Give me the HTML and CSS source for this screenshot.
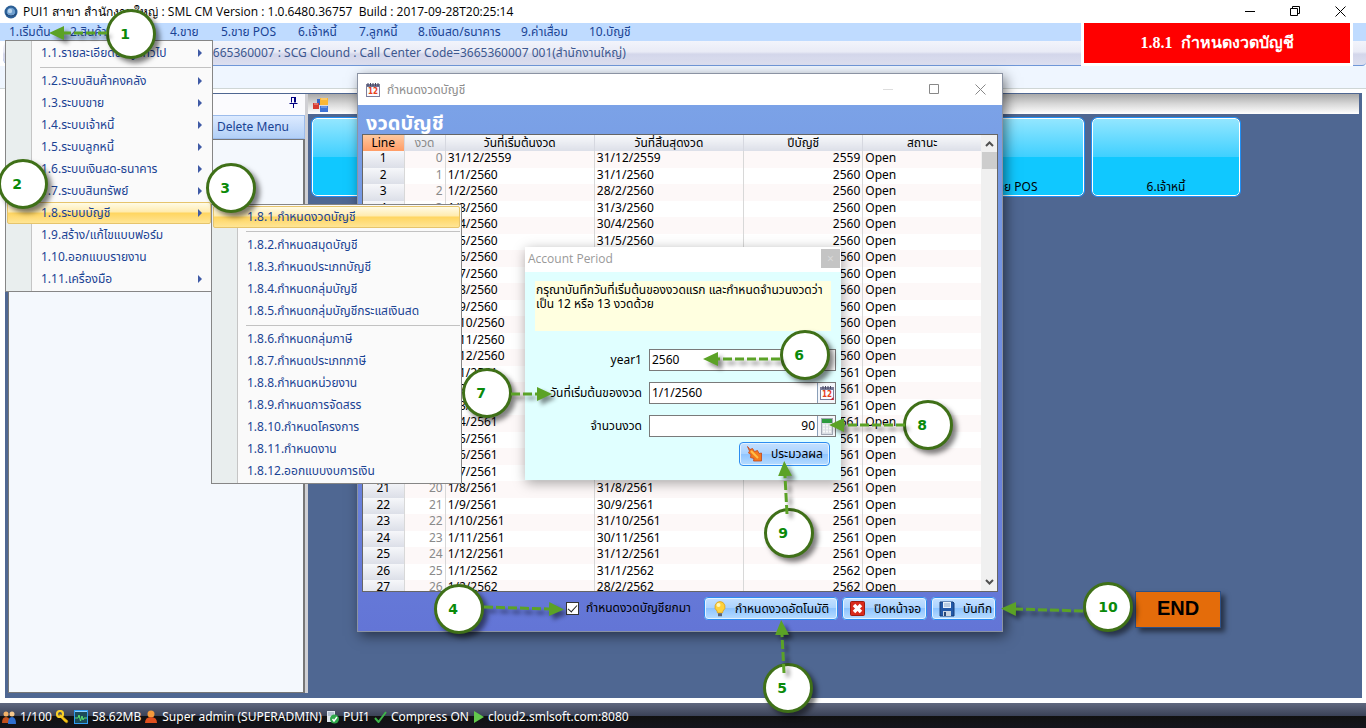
FILE: index.html
```html
<!DOCTYPE html>
<html lang="th">
<head>
<meta charset="utf-8">
<title>SML CM</title>
<link rel="stylesheet" href="styles.css">
</head>
<body>
<header class="titlebar">
  <svg class="app-icon" width="14" height="14" viewBox="0 0 14 14"><circle cx="7" cy="7" r="6.5" fill="#2b5f96"/><circle cx="7" cy="7" r="4.2" fill="#6f9fce"/><circle cx="6" cy="6" r="2.2" fill="#b8d3ec"/><path d="M2 9q5 4 10 0" stroke="#1d3f6e" fill="none"/></svg>
  <h1 class="titlebar-text">PUI1 สาขา สำนักงานใหญ่ : SML CM Version : 1.0.6480.36757 &nbsp;Build : 2017-09-28T20:25:14</h1>
  <div class="window-buttons">
    <button aria-label="Minimize"><svg width="11" height="11" viewBox="0 0 11 11"><path d="M0 5.500h10" stroke="#000"/></svg></button>
    <button aria-label="Restore"><svg width="11" height="11" viewBox="0 0 11 11"><path d="M.5 2.500h7v7h-7zM2.500 2.500v-2h7v7h-2" fill="none" stroke="#000"/></svg></button>
    <button aria-label="Close"><svg width="11" height="11" viewBox="0 0 11 11"><path d="M.5 .5l10 10M10.500 .5l-10 10" stroke="#000"/></svg></button>
  </div>
</header>

<nav class="menubar">
  <button class="w61">1.เริ่มต้น</button><button class="w61">2.สินค้า</button><button class="w39">3.ซื้อ</button><button class="w51">4.ขาย</button><button class="w77">5.ขาย POS</button><button class="w61">6.เจ้าหนี้</button><button class="w59">7.ลูกหนี้</button><button class="w103">8.เงินสด/ธนาคาร</button><button class="w68">9.ค่าเสื่อม</button><button class="w61">10.บัญชี</button>
</nav>
<div class="infobar"><span>3665360007 : SCG Clound : Call Center Code=3665360007 001(สำนักงานใหญ่)</span></div>
<div class="strip"></div>

<main class="workspace">
  <aside class="dock">
    <div class="dock-title"><svg width="9" height="11" viewBox="0 0 9 11"><path d="M2 .5h5M2.500 .5v5M5.500 .5v5M6.500 .5v5M.5 6.500h8M4.500 7v4" stroke="#000080" fill="none"/></svg></div>
    <div class="dock-tools"><button>Delete Menu</button></div>
    <div class="dock-list"></div>
  </aside>
  <section class="desk">
    <div class="tabs"><svg width="16" height="14" viewBox="0 0 16 14"><rect x="4" y="1" width="7" height="6" fill="#3466c8"/><rect x="7" y="0" width="8" height="7" fill="#fbb735"/><rect x="0" y="5" width="6" height="6" fill="#d63a2f"/><rect x="7" y="8" width="8" height="6" fill="#3f73d6"/><path d="M8 1h6M1 6h4M8 9h6" stroke="#fff" opacity=".5"/></svg></div>
    <div class="tiles">
      <button>1.เริ่มต้น</button><button>2.สินค้า</button><button>3.ซื้อ</button><button>4.ขาย</button><button>5.ขาย POS</button><button>6.เจ้าหนี้</button>
    </div>
  </section>
</main>

<footer class="status">
  <svg width="14" height="13" viewBox="0 0 14 13"><circle cx="4" cy="3" r="2.500" fill="#f2b36a"/><path d="M0 12q0-6 4-6t4 6z" fill="#c4501c"/><circle cx="10" cy="3" r="2.500" fill="#f7c98c"/><path d="M6 13q0-7 4-7t4 7z" fill="#2f6fd0"/></svg>
  <span>1/100</span>
  <svg width="14" height="14" viewBox="0 0 14 14"><path d="M4 4l8 7-1 2-2-1-6-6z" fill="#f5c518" stroke="#b78a08" stroke-width=".6"/><circle cx="4" cy="4" r="3" fill="none" stroke="#f8cf28" stroke-width="2.200"/></svg>
  <svg width="14" height="14" viewBox="0 0 14 14"><rect x=".5" y=".5" width="13" height="13" fill="#1c4b58" stroke="#2f9cf2"/><path d="M1 1.500h12" stroke="#8fd0ff"/><path d="M1 8h3l1-3 1.500 6 1.500-5 1 4 1-2h3" stroke="#58e070" fill="none"/></svg>
  <span>58.62MB</span>
  <svg width="13" height="14" viewBox="0 0 13 14"><circle cx="6" cy="4" r="3.500" fill="#f59a3c"/><path d="M0 13q0-6 6-6t6 6z" fill="#e0501e"/></svg>
  <span>Super admin (SUPERADMIN)</span>
  <svg width="13" height="14" viewBox="0 0 13 14"><path d="M1 1h8v11h-8z" fill="#dfe6ee"/><path d="M2 3h6M2 5h6" stroke="#8b9db5"/><circle cx="8.500" cy="9" r="4.500" fill="#2fa84a"/><path d="M6.500 9l1.500 2 3-4" stroke="#fff" stroke-width="1.400" fill="none"/></svg>
  <span>PUI1</span>
  <svg width="13" height="12" viewBox="0 0 13 12"><path d="M1 7l3.500 4L12 1" stroke="#3fb54a" stroke-width="2" fill="none"/></svg>
  <span>Compress ON</span>
  <svg width="11" height="12" viewBox="0 0 11 12"><path d="M1 0l10 6-10 6z" fill="#62c84c"/></svg>
  <span>cloud2.smlsoft.com:8080</span>
</footer>

<section class="window" aria-label="กำหนดงวดบัญชี">
  <div class="window-title">
    <svg width="14" height="14" viewBox="0 0 14 14"><rect x=".5" y="1.500" width="13" height="12" fill="#fbfbff" stroke="#7d7d9a"/><path d="M1 2h12v2h-12z" fill="#6f7390"/><path d="M2 0v3M4.500 0v3M7 0v3M9.500 0v3M12 0v3" stroke="#43455e"/><text x="2" y="10.500" class="cal">12</text></svg>
    <span>กำหนดงวดบัญชี</span>
    <div class="window-buttons dim">
      <button aria-label="Minimize"><svg width="11" height="11" viewBox="0 0 11 11"><path d="M0 5.500h10" stroke="#ddd"/></svg></button>
      <button aria-label="Maximize"><svg width="11" height="11" viewBox="0 0 11 11"><path d="M.5 .5h9v9h-9z" fill="none" stroke="#888"/></svg></button>
      <button aria-label="Close"><svg width="11" height="11" viewBox="0 0 11 11"><path d="M.5 .5l10 10M10.500 .5l-10 10" stroke="#888"/></svg></button>
    </div>
  </div>
  <div class="window-body">
    <h2>งวดบัญชี</h2>
    <div class="grid">
      <div class="grid-view">
        <table>
          <colgroup><col class="c-line"><col class="c-no"><col class="c-date"><col class="c-date"><col class="c-year"><col class="c-state"></colgroup>
          <thead><tr><th>Line</th><th>งวด</th><th>วันที่เริ่มต้นงวด</th><th>วันที่สิ้นสุดงวด</th><th>ปีบัญชี</th><th>สถานะ</th></tr></thead>
          <tbody id="periods"></tbody>
        </table>
      </div>
      <div class="scroll">
        <svg width="9" height="6" viewBox="0 0 9 6"><path d="M1 5l3.500-3.500L8 5" fill="none" stroke="#505050" stroke-width="2"/></svg>
        <i class="thumb"></i>
        <svg width="9" height="6" viewBox="0 0 9 6"><path d="M1 1l3.500 3.500L8 1" fill="none" stroke="#505050" stroke-width="2"/></svg>
      </div>
    </div>
    <div class="window-actions">
      <label class="check"><input type="checkbox" checked>กำหนดงวดบัญชียกมา</label>
      <button class="btn wide"><svg width="12" height="16" viewBox="0 0 12 16"><path d="M6 .5a5.300 5.300 0 0 0-3 9.500l.5 2h5l.5-2A5.300 5.300 0 0 0 6 .5z" fill="#ffd23c" stroke="#d99a12" stroke-width=".7"/><circle cx="4.500" cy="4" r="2" fill="#fff6b8"/><path d="M4 13h4M4 14.500h4" stroke="#5c6474" stroke-width="1.300"/></svg><span>กำหนดงวดอัตโนมัติ</span></button>
      <button class="btn mid"><svg width="16" height="16" viewBox="0 0 16 16"><rect x=".5" y=".5" width="14" height="14" rx="1" fill="#d92a1c" stroke="#9c1b10"/><path d="M4 4l7 7M11 4l-7 7" stroke="#fff" stroke-width="3.500"/></svg><span>ปิดหน้าจอ</span></button>
      <button class="btn small"><svg width="16" height="16" viewBox="0 0 16 16"><path d="M1 1h13l1 1v13H1z" fill="#2258a8" stroke="#173c78"/><path d="M4 1h8v6H4z" fill="#e8f1fb"/><path d="M5 3h6M5 5h6" stroke="#88a6cc"/><path d="M4 10h8v5H4z" fill="#c9d4e2"/><path d="M5 11h2v4H5z" fill="#2a4878"/></svg><span>บันทึก</span></button>
    </div>
  </div>
</section>

<form class="prompt" aria-label="Account Period">
  <div class="prompt-title"><span>Account Period</span><button type="button" aria-label="Close">×</button></div>
  <div class="prompt-body">
    <p class="note">กรุณาบันทึกวันที่เริ่มต้นของงวดแรก และกำหนดจำนวนงวดว่าเป็น 12 หรือ 13 งวดด้วย</p>
    <div class="field"><label for="year">year1</label><div class="entry"><input id="year" value="2560"></div></div>
    <div class="field"><label for="start">วันที่เริ่มต้นของงวด</label><div class="entry"><input id="start" value="1/1/2560"><button type="button" aria-label="ปฏิทิน"><svg width="14" height="15" viewBox="0 0 14 15"><rect x=".5" y="1.500" width="13" height="12" fill="#fbfbff" stroke="#7d7d9a"/><path d="M1 2h12v2h-12z" fill="#777b99"/><path d="M3 0v3M5.500 0v3M8 0v3M10.500 0v3" stroke="#43455e"/><text x="2" y="11" class="cal">12</text><path d="M10 14l3.500-3v3z" fill="#c23"/></svg></button></div></div>
    <div class="field"><label for="count">จำนวนงวด</label><div class="entry"><input id="count" class="num" value="90"><button type="button" aria-label="เครื่องคิดเลข"><svg width="12" height="17" viewBox="0 0 12 17"><rect x=".5" y=".5" width="11" height="16" fill="#d9dce2" stroke="#a3a8b4"/><path d="M1 1h10v4H1z" fill="#2e9b3e"/><path d="M2 7.500h8M2 10.500h8M2 13.500h8" stroke="#f8f8f8" stroke-width="2" stroke-dasharray="2 1"/></svg></button></div></div>
    <div class="prompt-actions"><button type="button" class="btn run"><svg width="16" height="16" viewBox="0 0 16 16"><path d="M.5 .5l2.500 3 2.500-1 2 3 3-1 1.500 3 2.500-.5v8H6.500l.5-2.500-3.500-1 .5-3-2.500-1.500 1-2z" fill="#f47a1e" stroke="#c2441a" stroke-width=".8"/><path d="M4 5l7 7" stroke="#ffc04a" stroke-width="2"/></svg><span>ประมวลผล</span></button></div>
  </div>
</form>

<div class="popup main-menu" role="menu">
  <button class="sub">1.1.รายละเอียดข้อมูลทั่วไป</button>
  <hr>
  <button class="sub">1.2.ระบบสินค้าคงคลัง</button>
  <button class="sub">1.3.ระบบขาย</button>
  <button class="sub">1.4.ระบบเจ้าหนี้</button>
  <button class="sub">1.5.ระบบลูกหนี้</button>
  <button class="sub">1.6.ระบบเงินสด-ธนาคาร</button>
  <button class="sub">1.7.ระบบสินทรัพย์</button>
  <button class="sub active">1.8.ระบบบัญชี</button>
  <button>1.9.สร้าง/แก้ไขแบบฟอร์ม</button>
  <button>1.10.ออกแบบรายงาน</button>
  <button class="sub">1.11.เครื่องมือ</button>
</div>
<div class="popup sub-menu" role="menu">
  <button class="active">1.8.1.กำหนดงวดบัญชี</button>
  <hr>
  <button>1.8.2.กำหนดสมุดบัญชี</button>
  <button>1.8.3.กำหนดประเภทบัญชี</button>
  <button>1.8.4.กำหนดกลุ่มบัญชี</button>
  <button>1.8.5.กำหนดกลุ่มบัญชีกระแสเงินสด</button>
  <hr>
  <button>1.8.6.กำหนดกลุ่มภาษี</button>
  <button>1.8.7.กำหนดประเภทภาษี</button>
  <button>1.8.8.กำหนดหน่วยงาน</button>
  <button>1.8.9.กำหนดการจัดสรร</button>
  <button>1.8.10.กำหนดโครงการ</button>
  <button>1.8.11.กำหนดงาน</button>
  <button>1.8.12.ออกแบบงบการเงิน</button>
</div>

<div class="topic">1.8.1 &nbsp;กำหนดงวดบัญชี</div>
<div class="end">END</div>
<div class="step s1">1</div><div class="step s2">2</div><div class="step s3">3</div><div class="step s4">4</div><div class="step s5">5</div>
<div class="step s6">6</div><div class="step s7">7</div><div class="step s8">8</div><div class="step s9">9</div><div class="step s10">10</div>
<svg class="arrows" width="1366" height="728" viewBox="0 0 1366 728">
  <defs><marker id="tip" markerUnits="userSpaceOnUse" markerWidth="16" markerHeight="16" refX="0" refY="8" orient="auto"><path d="M0 1l15 7-15 7z" fill="#5ba226"/></marker></defs>
  <g stroke="#5ba226" stroke-width="3" stroke-dasharray="9 3" fill="none">
    <path marker-end="url(#tip)" d="M107 33H64"/>
    <path marker-end="url(#tip)" d="M484 607L549 609"/>
    <path marker-end="url(#tip)" d="M784 673L782 635"/>
    <path marker-end="url(#tip)" d="M780 359H718"/>
    <path marker-end="url(#tip)" d="M511 394H537"/>
    <path marker-end="url(#tip)" d="M905 425H844"/>
    <path marker-end="url(#tip)" d="M787 514L785 476"/>
    <path marker-end="url(#tip)" d="M1083 611L1016 609"/>
  </g>
</svg>
<script src="app.js"></script>
</body>
</html>
```

FILE: styles.css
```css
* { box-sizing: border-box; }
body {
  margin: 0; height: 100vh; display: flex; flex-direction: column; position: relative;
  overflow: hidden; background: #fff; color: #000;
  font: 12px/16px "Noto Sans", "Noto Sans Thai", "Loma", sans-serif;
}
button { font: inherit; color: inherit; background: none; border: 0; padding: 0; margin: 0; }
h1, h2, p { margin: 0; font-weight: normal; }
svg { flex: none; display: block; }

.titlebar { display: flex; align-items: center; height: 23px; padding-left: 4px; gap: 5px; }
.titlebar-text { font: 12px/20px "Open Sans", sans-serif; white-space: nowrap; }
.window-buttons { display: flex; margin-left: auto; gap: 34px; padding-right: 20px; }
.window-buttons button { display: flex; }

.menubar { display: flex; height: 18px; padding-left: 9px; background: #bfdbff; color: #1a4394; }
.menubar button { text-align: left; white-space: nowrap; line-height: 18px; }
.w39 { width: 39px; } .w51 { width: 51px; } .w59 { width: 59px; } .w61 { width: 61px; }
.w68 { width: 68px; } .w77 { width: 77px; } .w103 { width: 103px; }

.infobar {
  height: 25px; margin-left: 3px; padding-left: 203px; line-height: 24px; color: #3d588f; white-space: nowrap;
  background: linear-gradient(#f2f4fb, #e9ebf6 45%, #d3d6ea 55%, #dcdff0);
  border-bottom: 1px solid #6f97d8; border-radius: 8px 0 4px 8px;
}
.strip { height: 23px; background: #eff6ff; border-bottom: 1px solid #cfd6d6; }

.workspace { flex: 1; display: flex; margin: 4px 4px 5px 5px; background: #4f6792; padding: 1px 3px 5px; min-height: 0; }
.dock { width: 297px; display: flex; flex-direction: column; margin-right: 3px; box-shadow: 3px 0 #d0d0d4; }
.dock-title { display: flex; justify-content: flex-end; padding: 3px 7px; height: 21px; background: #fbfbfe; }
.dock-tools { display: flex; justify-content: flex-end; height: 24px; padding-right: 15px; background: linear-gradient(#dceaff, #b2d0f7); border: 1px solid #9cbcec; color: #1a4394; }
.dock-list { flex: 1; background: #f4f8fd; border: 1px solid #777; border-right-width: 2px; }
.desk { flex: 1; min-width: 0; }
.tabs { height: 20px; padding: 4px 5px; background: linear-gradient(#a9a9a9, #d8d8d8 50%, #fff); }
.tiles { display: flex; gap: 8px; padding: 4px; }
.tiles button {
  width: 148px; height: 78px; display: flex; align-items: flex-end; justify-content: center; flex: none;
  border: 1px solid #fff; outline: 1px solid #1f8ff5; border-radius: 5px;
  background: linear-gradient(#93e6ff, #3fd0ff 50%, #10c8ff 50%);
}

.status {
  display: flex; align-items: center; gap: 4px; height: 25px; padding: 3px 2px 0; color: #fff; white-space: nowrap;
  background: linear-gradient(#60687f, #3c4358 50%, #111 52%, #14141c);
}

.window { position: absolute; left: 357px; top: 73px; width: 646px; border: 1px solid #8b93a3; box-shadow: 3px 4px 12px rgba(0,0,0,.5); }
.window-title { height: 31px; display: flex; align-items: center; gap: 7px; padding-left: 8px; background: #fff; color: #8d8d8d; }
.window-title .window-buttons { padding-right: 16px; gap: 35px; }
.cal { font: bold 8px "DejaVu Sans Condensed"; fill: #e8401c; }
.window-body { padding: 0 4px; background: linear-gradient(#7ba2e7, #6375d6); }
.window-body h2 { font-size: 20px; font-weight: bold; line-height: 29px; height: 29px; padding: 3px 0 0 4px; color: #fff; }
.grid { display: flex; height: 458px; border: 1px solid #666; background: #fff; }
.grid-view { flex: 1; overflow: hidden; }
table { width: 100%; table-layout: fixed; border-collapse: collapse; }
.c-line { width: 41px; } .c-no { width: 41px; } .c-date { width: 149px; } .c-year { width: 119px; } .c-state { width: 118px; }
th { height: 16px; padding: 0; font-weight: normal; line-height: 16px; background: linear-gradient(#f8f9fb, #dcdfe8); border-right: 1px solid #d6d8e0; white-space: nowrap; }
th:first-child { background: linear-gradient(#ffc9a0, #ff9c66); }
th:nth-child(2), td:nth-child(2) { color: #8a8a8a; }
td { padding: 0 2px; line-height: 14px; height: 16px; vertical-align: top; border-right: 1px solid #d8d8d8; }
tr:nth-child(odd) td { height: 17px; background: #fdf8f8; }
tbody td:first-child, tbody tr:nth-child(odd) td:first-child { text-align: center; background: linear-gradient(#f6f7fa, #dcdfe8); }
td:nth-child(2), td:nth-child(5) { text-align: right; }
th:last-child, td:last-child { border-right: 0; }
.scroll { width: 16px; display: flex; flex-direction: column; align-items: center; padding: 6px 0; background: #f0f0f0; }
.thumb { width: 15px; height: 17px; margin: 5px 0 auto; background: #cdcdcd; }
.window-actions { display: flex; justify-content: flex-end; align-items: flex-start; gap: 4px; height: 39px; padding: 5px 2px 0; }
.check { display: flex; align-items: center; gap: 7px; height: 22px; margin-right: 9px; white-space: nowrap; }
.check input { appearance: none; width: 13px; height: 13px; margin: 0; border: 1px solid #333; background: #fff; display: grid; place-items: center; }
.check input::before { content: ""; width: 8px; height: 4px; border: solid #222; border-width: 0 0 1px 1px; transform: rotate(-48deg); margin-bottom: 2px; }
.btn { display: flex; align-items: center; height: 23px; padding: 0 7px; gap: 8px; white-space: nowrap; border: 1px solid #eaf6ff; border-radius: 4px; outline: 1px solid #2c8cf0; outline-offset: -1px; box-shadow: inset 0 0 0 1px #e4f2ff; background: linear-gradient(#c4e0ff, #a9d2ff 50%, #8ec4ff 50%, #b7dcff); }
.btn span { flex: 1; text-align: center; }
.wide { width: 134px; padding-left: 9px; } .mid { width: 85px; } .small { width: 65px; } .run { width: 91px; height: 24px; }

.prompt { position: absolute; left: 525px; top: 247px; width: 316px; background: #e0ffff; box-shadow: 1px 3px 12px rgba(0,0,0,.35); }
.prompt-title { display: flex; height: 25px; padding-left: 3px; background: #fff; color: #999; line-height: 24px; }
.prompt-title span { font-family: "Open Sans", sans-serif; }
.prompt-title button { margin: 2px 1px 0 auto; width: 19px; height: 19px; line-height: 17px; background: #c4c4c4; color: #d8d8d8; }
.prompt-body { padding: 9px 5px 14px 10px; display: flex; flex-direction: column; gap: 11px; }
.note { width: 296px; height: 50px; margin-bottom: 7px; padding: 2px 1px; line-height: 14px; background: #ffffe0; }
.field { display: grid; grid-template-columns: 107px 187px; gap: 7px; align-items: center; }
.field label { text-align: right; white-space: nowrap; }
.entry { display: flex; height: 22px; background: #fff; border: 1px solid #7a7a7a; }
.entry input { flex: 1; min-width: 0; border: 0; padding: 0 2px; font: inherit; background: #fff; }
.entry .num { text-align: right; }
.entry button { width: 18px; display: grid; place-items: center; border-left: 1px solid #8a9fb8; background: #f4f6fa; }
.prompt-actions { display: flex; justify-content: flex-end; padding-right: 6px; margin-top: -6px; }

.popup { position: absolute; display: flex; flex-direction: column; border: 1px solid #868686; color: #1a4394; background: linear-gradient(90deg, #e9eeee 25px, #c5c5c5 25px, #c5c5c5 26px, #fafafa 26px); padding: 1px; }
.main-menu { left: 5px; top: 40px; width: 208px; }
.sub-menu { left: 211px; top: 204px; width: 251px; }
.popup button { display: flex; align-items: center; justify-content: space-between; height: 22px; padding: 0 8px 0 33px; text-align: left; white-space: nowrap; border: 1px solid transparent; border-radius: 2px; }
.sub::after { content: ""; border: 4px solid transparent; border-left-color: #3f5aa5; border-right: 0; }
.popup hr { width: auto; height: 1px; margin: 3px 0 2px 33px; border: 0; background: #c2c2c2; }
.popup .active { border-color: #e6c46c; background: linear-gradient(#fffbe6, #ffebae 45%, #ffd560 50%, #ffe595); }

.topic { position: absolute; left: 1081px; top: 20px; width: 272px; height: 46px; border: 3px solid #fff; background: #f00; color: #fff; font: bold 16px/40px "Liberation Serif", serif; text-align: center; }
.end { position: absolute; left: 1135px; top: 591px; width: 86px; height: 37px; border: 1px solid #2d5086; background: #e46c0a; color: #000; font: bold 20px/33px "Liberation Sans", sans-serif; text-align: center; box-shadow: 4px 4px 5px rgba(0,0,0,.5); }
.step { position: absolute; width: 50px; height: 50px; padding-right: 12px; border: 3px solid #3f7018; border-radius: 50%; background: #fff; color: #0a8a0a; font: bold 14px/44px "DejaVu Sans", sans-serif; text-align: center; box-shadow: 4px 4px 5px rgba(0,0,0,.5); }
.s1 { left: 106px; top: 9px; } .s2 { left: -2px; top: 159px; } .s3 { left: 206px; top: 163px; }
.s4 { left: 434px; top: 584px; } .s5 { left: 763px; top: 663px; } .s6 { left: 780px; top: 330px; }
.s7 { left: 462px; top: 368px; } .s8 { left: 903px; top: 400px; } .s9 { left: 764px; top: 508px; }
.s10 { left: 1083px; top: 582px; padding-right: 0; }
.arrows { position: absolute; left: 0; top: 0; pointer-events: none; filter: drop-shadow(4px 4px 2px rgba(0,0,0,.45)); }
```

FILE: app.js
```js
// Fills the period grid: an opening period, then one row per month (Buddhist era).
const days = [31, 28, 31, 30, 31, 30, 31, 31, 30, 31, 30, 31];
const rows = [["31/12/2559", "31/12/2559", 2559]];
for (let i = 0; i < 26; i++) {
  const m = i % 12, y = 2560 + Math.floor(i / 12);
  rows.push([`1/${m + 1}/${y}`, `${days[m]}/${m + 1}/${y}`, y]);
}
document.getElementById("periods").innerHTML = rows
  .map((r, i) => `<tr><td>${i + 1}</td><td>${i}</td><td>${r[0]}</td><td>${r[1]}</td><td>${r[2]}</td><td>Open</td></tr>`)
  .join("");
```
